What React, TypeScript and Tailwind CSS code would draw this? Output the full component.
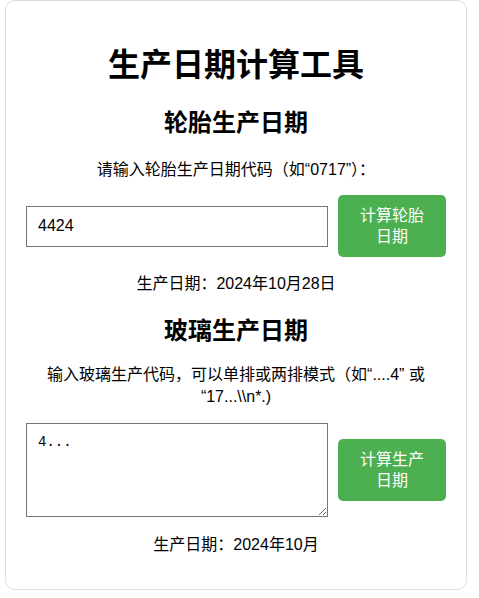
import { useState } from "react";

const FONT = "font-['Liberation_Sans','Noto_Sans_CJK_SC',sans-serif]";

function Row({ children, label }: { children: React.ReactNode; label: string }) {
  return (
    <div className="flex items-center gap-[10px]">
      <div className="flex-1">{children}</div>
      <button className="w-[108px] shrink-0 rounded-[5px] bg-[#4CAF50] px-5 py-[10px] text-[16px] leading-[21px] text-white">
        {label}
      </button>
    </div>
  );
}

export default function App() {
  const [tire, setTire] = useState("4424");
  const [glass, setGlass] = useState("4...");

  return (
    <div className={`min-h-[598px] bg-white px-[5px] text-black ${FONT}`}>
      <div className="w-[462px] rounded-[10px] border border-[#dddddd] px-5 pb-[33px] pt-[46px] text-center">
        <h1 className="text-[32px] font-bold leading-[37px]">生产日期计算工具</h1>

        <h2 className="mt-[25px] text-[24px] font-bold leading-[28px]">轮胎生产日期</h2>
        <p className="mt-[22px] text-[16px] leading-[22px]">请输入轮胎生产日期代码（如“0717”）：</p>
        <div className="mt-[14px]">
          <Row label="计算轮胎日期">
            <input
              value={tire}
              onChange={(e) => setTire(e.target.value)}
              className="block h-[41px] w-full border border-[#767676] px-[11px] text-left text-[16px] outline-none"
            />
          </Row>
        </div>
        <p className="mt-[16px] text-[16px] leading-[22px]">生产日期：2024年10月28日</p>

        <h2 className="mt-[22px] text-[24px] font-bold leading-[28px]">玻璃生产日期</h2>
        <p className="mt-[19px] text-[16px] leading-[22px]">
          输入玻璃生产代码，可以单排或两排模式（如“....4” 或 “17...\\n*.)
        </p>
        <div className="mt-[15px]">
          <Row label="计算生产日期">
            <textarea
              value={glass}
              onChange={(e) => setGlass(e.target.value)}
              className="block h-[94px] w-full border border-[#767676] px-[11px] py-[10px] text-left font-['Liberation_Mono',monospace] text-[14px] leading-[17px] outline-none"
            />
          </Row>
        </div>
        <p className="mt-[17px] text-[16px] leading-[22px]">生产日期：2024年10月</p>
      </div>
    </div>
  );
}
